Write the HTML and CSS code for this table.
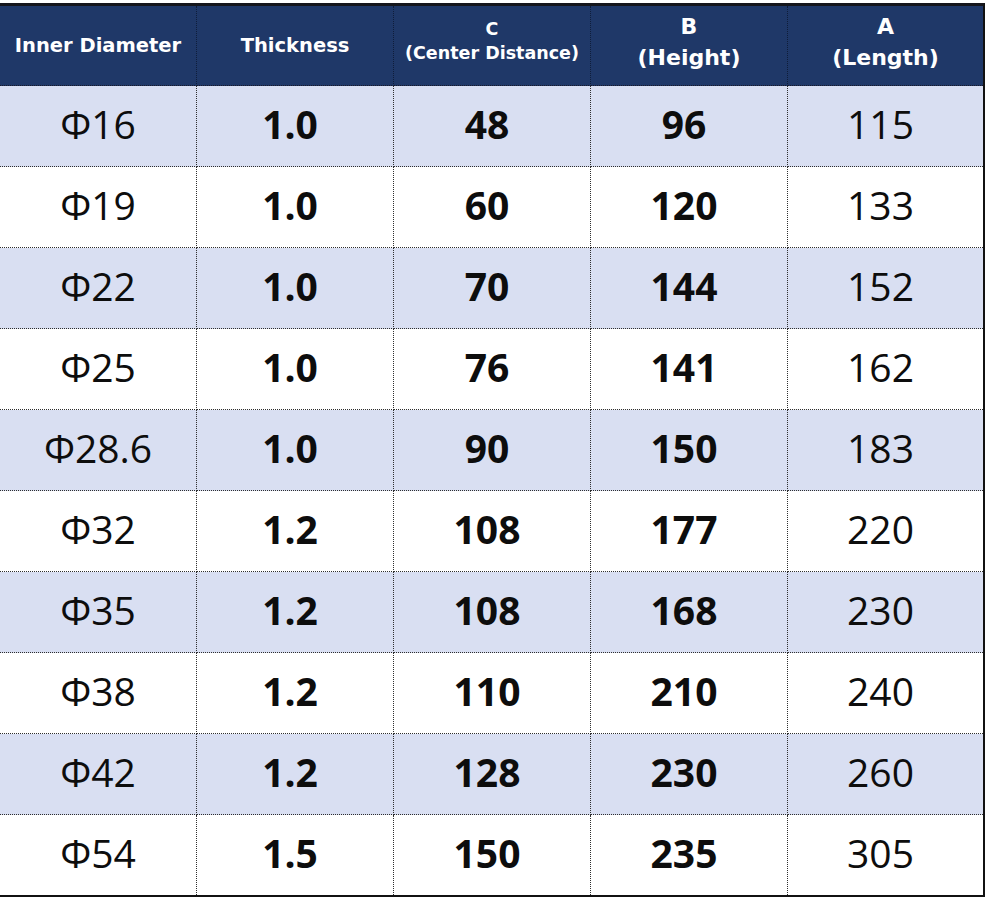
FILE: index.html
```html
<!DOCTYPE html>
<html>
<head>
<meta charset="utf-8">
<link rel="stylesheet" href="styles.css">
</head>
<body>
<div class="page">
  <div class="table">
    <div class="cell head"><span class="h1">Inner Diameter</span></div>
    <div class="cell head"><span class="h1">Thickness</span></div>
    <div class="cell head two small"><span>C</span><span>(Center Distance)</span></div>
    <div class="cell head two"><span>B</span><span>(Height)</span></div>
    <div class="cell head two last"><span>A</span><span>(Length)</span></div>

    <div class="cell alt first">Φ16</div><div class="cell alt b">1.0</div><div class="cell alt b">48</div><div class="cell alt b">96</div><div class="cell alt n last">115</div>
    <div class="cell first">Φ19</div><div class="cell b">1.0</div><div class="cell b">60</div><div class="cell b">120</div><div class="cell n last">133</div>
    <div class="cell alt first">Φ22</div><div class="cell alt b">1.0</div><div class="cell alt b">70</div><div class="cell alt b">144</div><div class="cell alt n last">152</div>
    <div class="cell first">Φ25</div><div class="cell b">1.0</div><div class="cell b">76</div><div class="cell b">141</div><div class="cell n last">162</div>
    <div class="cell alt first">Φ28.6</div><div class="cell alt b">1.0</div><div class="cell alt b">90</div><div class="cell alt b">150</div><div class="cell alt n last">183</div>
    <div class="cell first">Φ32</div><div class="cell b">1.2</div><div class="cell b">108</div><div class="cell b">177</div><div class="cell n last">220</div>
    <div class="cell alt first">Φ35</div><div class="cell alt b">1.2</div><div class="cell alt b">108</div><div class="cell alt b">168</div><div class="cell alt n last">230</div>
    <div class="cell first">Φ38</div><div class="cell b">1.2</div><div class="cell b">110</div><div class="cell b">210</div><div class="cell n last">240</div>
    <div class="cell alt first">Φ42</div><div class="cell alt b">1.2</div><div class="cell alt b">128</div><div class="cell alt b">230</div><div class="cell alt n last">260</div>
    <div class="cell first bottom">Φ54</div><div class="cell b bottom">1.5</div><div class="cell b bottom">150</div><div class="cell b bottom">235</div><div class="cell n last bottom">305</div>
  </div>
</div>
</body>
</html>
```

FILE: styles.css
```css
html, body {
  margin: 0;
  padding: 0;
  background: #ffffff;
}

.page {
  padding-top: 3px;
  width: 987px;
}

.table {
  display: grid;
  grid-template-columns: 197px 197px 197px 197px 195px;
  grid-template-rows: 80px repeat(9, 81px) 80px;
  width: 983px;
  border-top: 3px solid #15161c;
  border-right: 2px solid #111111;
  border-bottom: 2px solid #111111;
}

.cell {
  display: flex;
  align-items: center;
  justify-content: center;
  border-right: 1px dotted #2e2e2e;
  border-bottom: 1px dotted #2e2e2e;
  background: #ffffff;
  color: #0d0d0d;
  font-family: "Open Sans", "Noto Sans", sans-serif;
  font-size: 39px;
  box-sizing: border-box;
  padding-right: 10px;
  padding-bottom: 5px;
}

.cell.first {
  padding-right: 0;
}

.cell.last {
  border-right: none;
}

.cell.bottom {
  border-bottom: none;
}

.cell.alt {
  background: #d9dff2;
}

.cell.b {
  font-weight: 700;
}

.cell.n {
  font-weight: 400;
}

.cell.head {
  background: #1f3868;
  color: #ffffff;
  font-family: "DejaVu Sans", Verdana, sans-serif;
  font-weight: 700;
  font-size: 19.5px;
  padding: 0;
  border-right: 1px dotted #0f1d3a;
  border-bottom: 1px dotted #1a1a2a;
  flex-direction: column;
  white-space: nowrap;
}

.cell.head.last {
  border-right: none;
}

.cell.head.two {
  font-size: 22px;
  line-height: 31px;
  padding-bottom: 8px;
}

.cell.head.two.small {
  font-size: 17.5px;
  line-height: 24px;
  padding-bottom: 10px;
}

.h1 {
  display: block;
}
```
